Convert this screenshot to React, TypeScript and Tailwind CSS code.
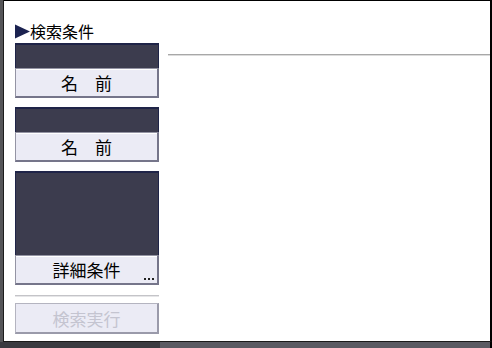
const FONT = { fontFamily: '"Noto Sans CJK JP", "DejaVu Sans", sans-serif' };

function Field({ height }: { height: string }) {
  return (
    <div
      className={`${height} bg-[#3c3c4e] border-t-2 border-l border-r border-[#1f2448]`}
    />
  );
}

function NameButton({ label, dots }: { label: string; dots?: boolean }) {
  return (
    <div className="relative h-[30px] flex items-center justify-center bg-[#ebebf5] border border-[#9494a4] border-r-2 border-b-2 border-r-[#75758a] border-b-[#75758a] shadow-[inset_0_1px_0_#ffffff] text-[17px] leading-none text-black">
      {label}
      {dots && (
        <span className="absolute right-[3px] bottom-[3px] flex gap-[2px]">
          <span className="w-[2px] h-[2px] bg-[#222]" />
          <span className="w-[2px] h-[2px] bg-[#222]" />
          <span className="w-[2px] h-[2px] bg-[#222]" />
        </span>
      )}
    </div>
  );
}

export default function App() {
  return (
    <div className="w-[492px] h-[348px] flex flex-col bg-[#3a3a40] overflow-hidden" style={FONT}>
      <div className="flex flex-1 min-h-0">
        <div className="w-[4px] bg-[#555558] border-r border-[#1c1c1c]" />
        <div className="flex-1 flex bg-white border-t border-black border-r-2 border-b border-b-[#1a1a1a] pl-[11px]">
          <div className="w-[144px] flex flex-col">
            <div className="h-[20px] mt-[20px] flex items-center text-[16px] leading-none text-black">
              <svg width="15" height="15" viewBox="0 0 15 15">
                <polygon points="0,0.5 15,7.5 0,14.5" fill="#1b2250" />
              </svg>
              <span>検索条件</span>
            </div>
            <div className="mt-[2px]">
              <Field height="h-[25px]" />
              <NameButton label="名　前" />
            </div>
            <div className="mt-[9px]">
              <Field height="h-[25px]" />
              <NameButton label="名　前" />
            </div>
            <div className="mt-[9px]">
              <Field height="h-[84px]" />
              <NameButton label="詳細条件" dots />
            </div>
            <div className="mt-[10px] h-[2px] bg-[#c4c4c8] border-b border-[#e6e6e8]" />
            <div className="mt-[6px] h-[31px] flex items-center justify-center bg-[#ebebf5] border border-[#b4b4c0] border-r-2 border-b-2 border-r-[#9a9aaa] border-b-[#9a9aaa] text-[17px] leading-none text-[#c4c4d0]">
              検索実行
            </div>
          </div>
          <div className="flex-1 ml-[9px]">
            <div className="mt-[53px] h-[2px] bg-[#a8a8a8] border-b border-[#dcdcdc]" />
          </div>
        </div>
      </div>
      <div className="h-[6px] flex">
        <div className="w-[160px] bg-[#3a3a40]" />
        <div className="flex-1 bg-[#5a5a62] border-r-2 border-black" />
      </div>
    </div>
  );
}
